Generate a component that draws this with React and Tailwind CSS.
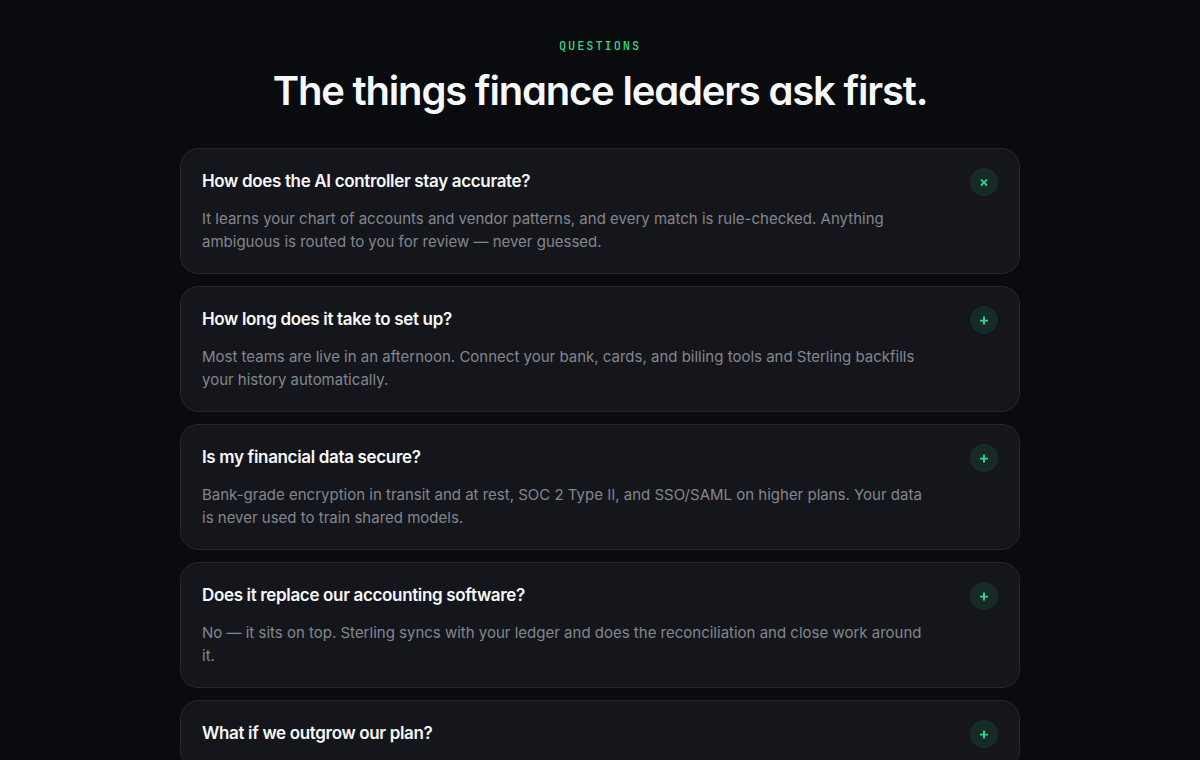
import { useState } from 'react';

const faqs = [
  {
    question: 'How does the AI controller stay accurate?',
    answer:
      'It learns your chart of accounts and vendor patterns, and every match is rule-checked. Anything ambiguous is routed to you for review — never guessed.',
  },
  {
    question: 'How long does it take to set up?',
    answer:
      'Most teams are live in an afternoon. Connect your bank, cards, and billing tools and Sterling backfills your history automatically.',
  },
  {
    question: 'Is my financial data secure?',
    answer:
      'Bank-grade encryption in transit and at rest, SOC 2 Type II, and SSO/SAML on higher plans. Your data is never used to train shared models.',
  },
  {
    question: 'Does it replace our accounting software?',
    answer:
      'No — it sits on top. Sterling syncs with your ledger and does the reconciliation and close work around it.',
  },
  { question: 'What if we outgrow our plan?' },
];

const FaqItem = ({ question, answer, active, onToggle }) => (
  <li className="rounded-[18px] border border-[#24262b] bg-[#15161b] px-[21px] pt-[19px] pb-5">
    <h3>
      <button
        type="button"
        onClick={onToggle}
        className="flex w-full cursor-pointer items-center justify-between gap-4 text-left text-[17px] leading-6 font-semibold tracking-[-0.02em] text-[#f7f8f8]"
      >
        <span className="pb-0.5">{question}</span>
        <span className="grid size-7 shrink-0 place-items-center rounded-full bg-[#162b27] text-[#34d68b]">
          <svg viewBox="0 0 10 10" aria-hidden="true" className="size-[10px]">
            <path
              d={active ? 'M2 2.6l6 6M8 2.6l-6 6' : 'M5 1.6v8M1 5.6h8'}
              stroke="currentColor"
              strokeWidth="1.9"
            />
          </svg>
        </span>
      </button>
    </h3>
    {answer && (
      <p className="mt-[11px] max-w-[724px] text-[15px] leading-[23px] text-[#82868e]">{answer}</p>
    )}
  </li>
);

const App = () => {
  const [activeIndex, setActiveIndex] = useState(0);

  return (
    <main className="min-h-screen bg-[#090b0e] px-6 pt-9 font-['Inter',sans-serif]">
      <section className="mx-auto max-w-[840px]">
        <header className="text-center">
          <p className="font-['JetBrains_Mono','Liberation_Mono',monospace] text-xs leading-5 font-medium tracking-[0.16em] text-[#34d68b] uppercase">
            Questions
          </p>
          <h2 className="mt-3 text-[40px] leading-[46px] font-semibold tracking-[-0.03em] text-[#f7f8f8] [font-feature-settings:'cv11']">
            The things finance leaders ask first.
          </h2>
        </header>

        <ul className="mt-[34px] flex flex-col gap-3">
          {faqs.map((faq, index) => (
            <FaqItem
              key={faq.question}
              {...faq}
              active={index === activeIndex}
              onToggle={() => setActiveIndex(index === activeIndex ? -1 : index)}
            />
          ))}
        </ul>
      </section>
    </main>
  );
};

export default App;
